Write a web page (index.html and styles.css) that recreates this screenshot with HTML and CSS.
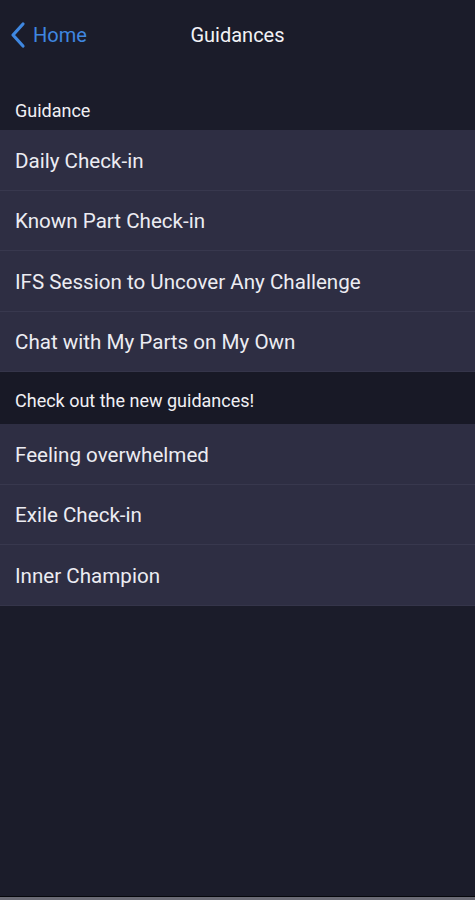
FILE: index.html
```html
<!DOCTYPE html>
<html>
<head>
    <title>Guidances</title>
    <meta name="viewport" content="width=device-width, initial-scale=1">
    <link rel="stylesheet" href="styles.css">
</head>
<body>

<div class="screen">
    <!-- Top Navigation -->
    <div class="navbar">
        <a class="back-link" href="#">
            <svg class="chevron" width="18" height="28" viewBox="0 0 18 28">
                <path d="M14 3 L4 14 L14 25" fill="none" stroke="#3f87e0" stroke-width="3.2" stroke-linecap="round" stroke-linejoin="round"/>
            </svg>
            <span>Home</span>
        </a>
        <h1 class="nav-title">Guidances</h1>
    </div>

    <!-- Guidance List -->
    <div class="section-label">Guidance</div>
    <ul class="list">
        <li>Daily Check-in</li>
        <li>Known Part Check-in</li>
        <li>IFS Session to Uncover Any Challenge</li>
        <li>Chat with My Parts on My Own</li>
    </ul>

    <div class="section-label section-label-dark">Check out the new guidances!</div>
    <ul class="list">
        <li>Feeling overwhelmed</li>
        <li>Exile Check-in</li>
        <li>Inner Champion</li>
    </ul>

    <div class="spacer"></div>
    <div class="bottom-bar"></div>
</div>

</body>
</html>
```

FILE: styles.css
```css
/* Global Reset */
* {
    margin: 0;
    padding: 0;
    box-sizing: border-box;
    font-family: Roboto, "Liberation Sans", Arial, sans-serif;
}

body {
    background: #1b1c2a;
    color: #ececf2;
}

.screen {
    display: flex;
    flex-direction: column;
    height: 900px;
}

/* Navigation Bar */
.navbar {
    position: relative;
    display: flex;
    align-items: center;
    justify-content: center;
    height: 70px;
}

.back-link {
    position: absolute;
    left: 9px;
    top: 21px;
    display: flex;
    align-items: center;
    gap: 6px;
    color: #3f87e0;
    text-decoration: none;
    font-size: 20px;
}

.chevron {
    display: block;
}

.nav-title {
    font-size: 20px;
    font-weight: 400;
    color: #f2f2f6;
}

/* Section Labels */
.section-label {
    height: 60px;
    display: flex;
    align-items: flex-end;
    padding: 0 15px 9px;
    font-size: 18px;
    font-weight: 400;
    color: #f0f0f4;
}

.section-label-dark {
    height: 52px;
    align-items: center;
    padding-top: 5px;
    padding-bottom: 0;
    background: #181926;
}

/* List Rows */
.list {
    list-style: none;
    background: #2e2e43;
}

.list li {
    height: 60.5px;
    display: flex;
    align-items: center;
    padding: 2px 15px 0;
    font-size: 20.6px;
    color: #ececf2;
    border-bottom: 1px solid #38384e;
}

.list li:last-child {
    border-bottom: 1px solid #35354a;
}

.spacer {
    flex: 1;
}

.bottom-bar {
    height: 4px;
    border-top: 1px solid #06070c;
    background: #6b6b75;
}
```
